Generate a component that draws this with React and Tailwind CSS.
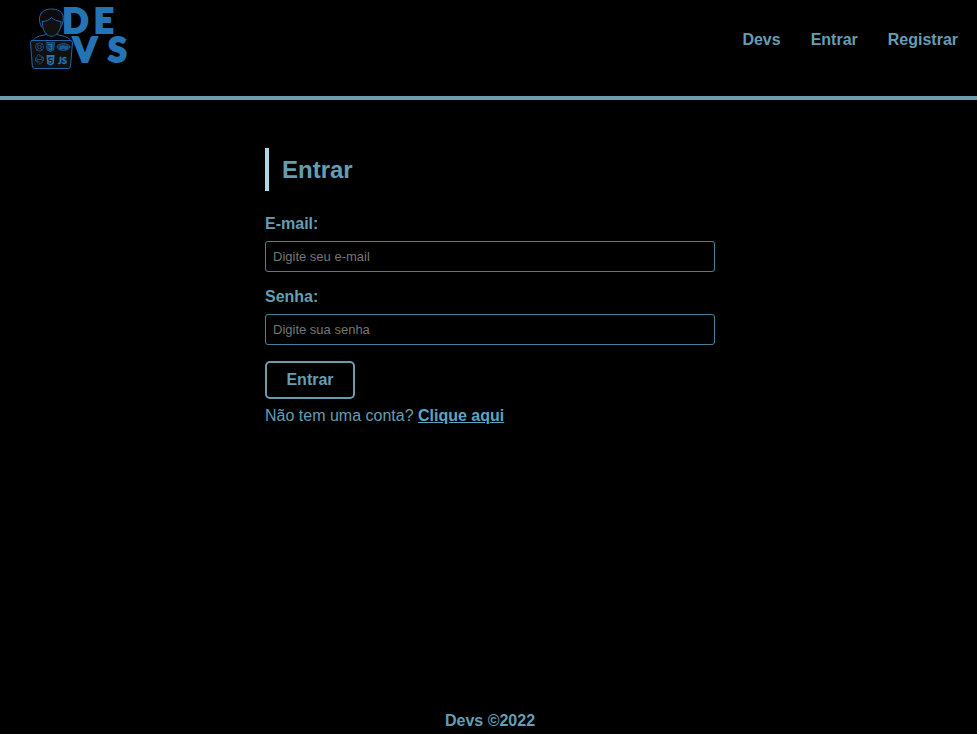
const navItems = ["Devs", "Entrar", "Registrar"];

function Logo() {
  return (
    <svg width="101" height="72" viewBox="29 0 101 72" fill="none" stroke="#1f66a6" strokeWidth="1" strokeLinecap="round" strokeLinejoin="round" role="img" aria-label="DEVS">
      <path d="M41.5 27C37.5 20 39 11.500 47 9.500C51 8.500 60 8.500 62.500 14.500C64 18.500 63.500 22 61 27" fill="#0c0c0c" />
      <path d="M42.500 21.500C46 21.500 49.500 20 51.500 17.500C54 20 57 21 61 21.500C61.500 27 59 33 55.500 35C53 37 50 36.500 47.500 35C44 33 42 27 42.500 21.500Z" fill="#111" />
      <path d="M46.500 34.500C45 35.500 40.500 35 37 37C35 38 33.500 39 33 40.500M57 34.500C60 36 64 35.500 67 37.500C69 38.500 70 39.500 70.500 40.500" />
      <path d="M32 40.500H70.500Q72.500 40.500 72.500 42.500L70.500 66Q70.500 68.500 68.500 68.500H34.500Q32.500 68.500 32.300 66L30.500 42.500Q30.500 40.500 32 40.500Z" fill="#101010" />
      <g strokeWidth="0.800" opacity="0.850">
        <circle cx="39.500" cy="47" r="4" />
        <circle cx="39.500" cy="47" r="1.800" />
        <path d="M36.800 43.800L38 45.200M42.200 43.800L41 45.200M36.800 50.200L38 48.800M42.200 50.200L41 48.800" />
        <path d="M46.500 42.500H54.500L53.800 50L50.500 51.500L47.200 50Z" fill="#154a7a" />
        <path d="M48.500 44.500H52.300L50.500 46.500H52L51.800 49L50.500 49.600L49 49" stroke="#3b8ed0" />
        <ellipse cx="63.500" cy="47" rx="6.500" ry="3.500" fill="#123b60" />
        <path d="M39.500 56H42V59.500H37V62H39.500M39.500 54.500C36 54.500 37 58 37 58H35.500V61H37M39.500 64C43 64 42 60.500 42 60.500H43.500V57.500H42" />
      </g>
      <path d="M46.500 55H54.500L53.800 64L50.500 65.500L47.200 64Z" fill="#2474b5" stroke="none" />
      <path d="M52.500 57.800H48.700L49 60.500H52.100L51.900 62.800L50.500 63.400L49 62.800" stroke="#101010" strokeWidth="1" />
      <g stroke="none" fill="#2474b5" className="font-['Lato',sans-serif] font-black">
        <text x="59.500" y="48.500" fontSize="5">php</text>
        <text x="58" y="64" fontSize="9" stroke="#2474b5" strokeWidth="0.300">JS</text>
        <g stroke="#2474b5" strokeWidth="2" strokeLinejoin="miter" fontSize="34">
          <text x="62.500" y="33">D</text>
          <text x="94" y="33">E</text>
          <text x="73" y="62">V</text>
          <text x="108" y="62">S</text>
        </g>
      </g>
    </svg>
  );
}

function Field({ id, label, type, placeholder }) {
  return (
    <div className="flex flex-col gap-2">
      <label htmlFor={id} className="font-bold leading-[18px]">{label}</label>
      <input
        id={id}
        type={type}
        placeholder={placeholder}
        className="h-[31px] w-full rounded-[3px] border border-[#468599] bg-black px-[7px] text-[13px] text-[#669db3] outline-none placeholder:text-[#757575] focus:border-[#add8e6]"
      />
    </div>
  );
}

export default function App() {
  return (
    <div className="flex min-h-screen flex-col bg-black font-['Liberation_Sans',Arial,sans-serif] text-base text-[#669db3]">
      <header className="flex h-[100px] items-start justify-between border-b-4 border-[#6a9cae] pl-[29px] pr-[19px]">
        <a href="#"><Logo /></a>
        <nav className="pt-[31px]">
          <ul className="flex gap-[30px] leading-[18px]">
            {navItems.map((item) => (
              <li key={item}><a href="#" className="font-bold hover:underline">{item}</a></li>
            ))}
          </ul>
        </nav>
      </header>
      <div className="flex flex-1 flex-col pl-[3px]">
        <main className="mx-auto w-full max-w-[450px] flex-1 pt-12">
          <h1 className="border-l-4 border-[#add8e6] py-2 pl-[13px] text-2xl font-bold leading-[27px]">Entrar</h1>
          <form className="mt-6 flex flex-col items-stretch gap-4" onSubmit={(e) => e.preventDefault()}>
            <Field id="email" label="E-mail:" type="email" placeholder="Digite seu e-mail" />
            <Field id="password" label="Senha:" type="password" placeholder="Digite sua senha" />
            <button type="submit" className="h-[38px] w-[90px] rounded-[5px] border-2 border-[#6a9cae] font-bold">Entrar</button>
          </form>
          <p className="mt-2 leading-[18px]">
            Não tem uma conta?{" "}
            <a href="#" className="font-bold text-[#5ba4c2] underline">Clique aqui</a>
          </p>
        </main>
        <footer className="pb-1 text-center font-bold leading-[18px]">Devs ©2022</footer>
      </div>
    </div>
  );
}
